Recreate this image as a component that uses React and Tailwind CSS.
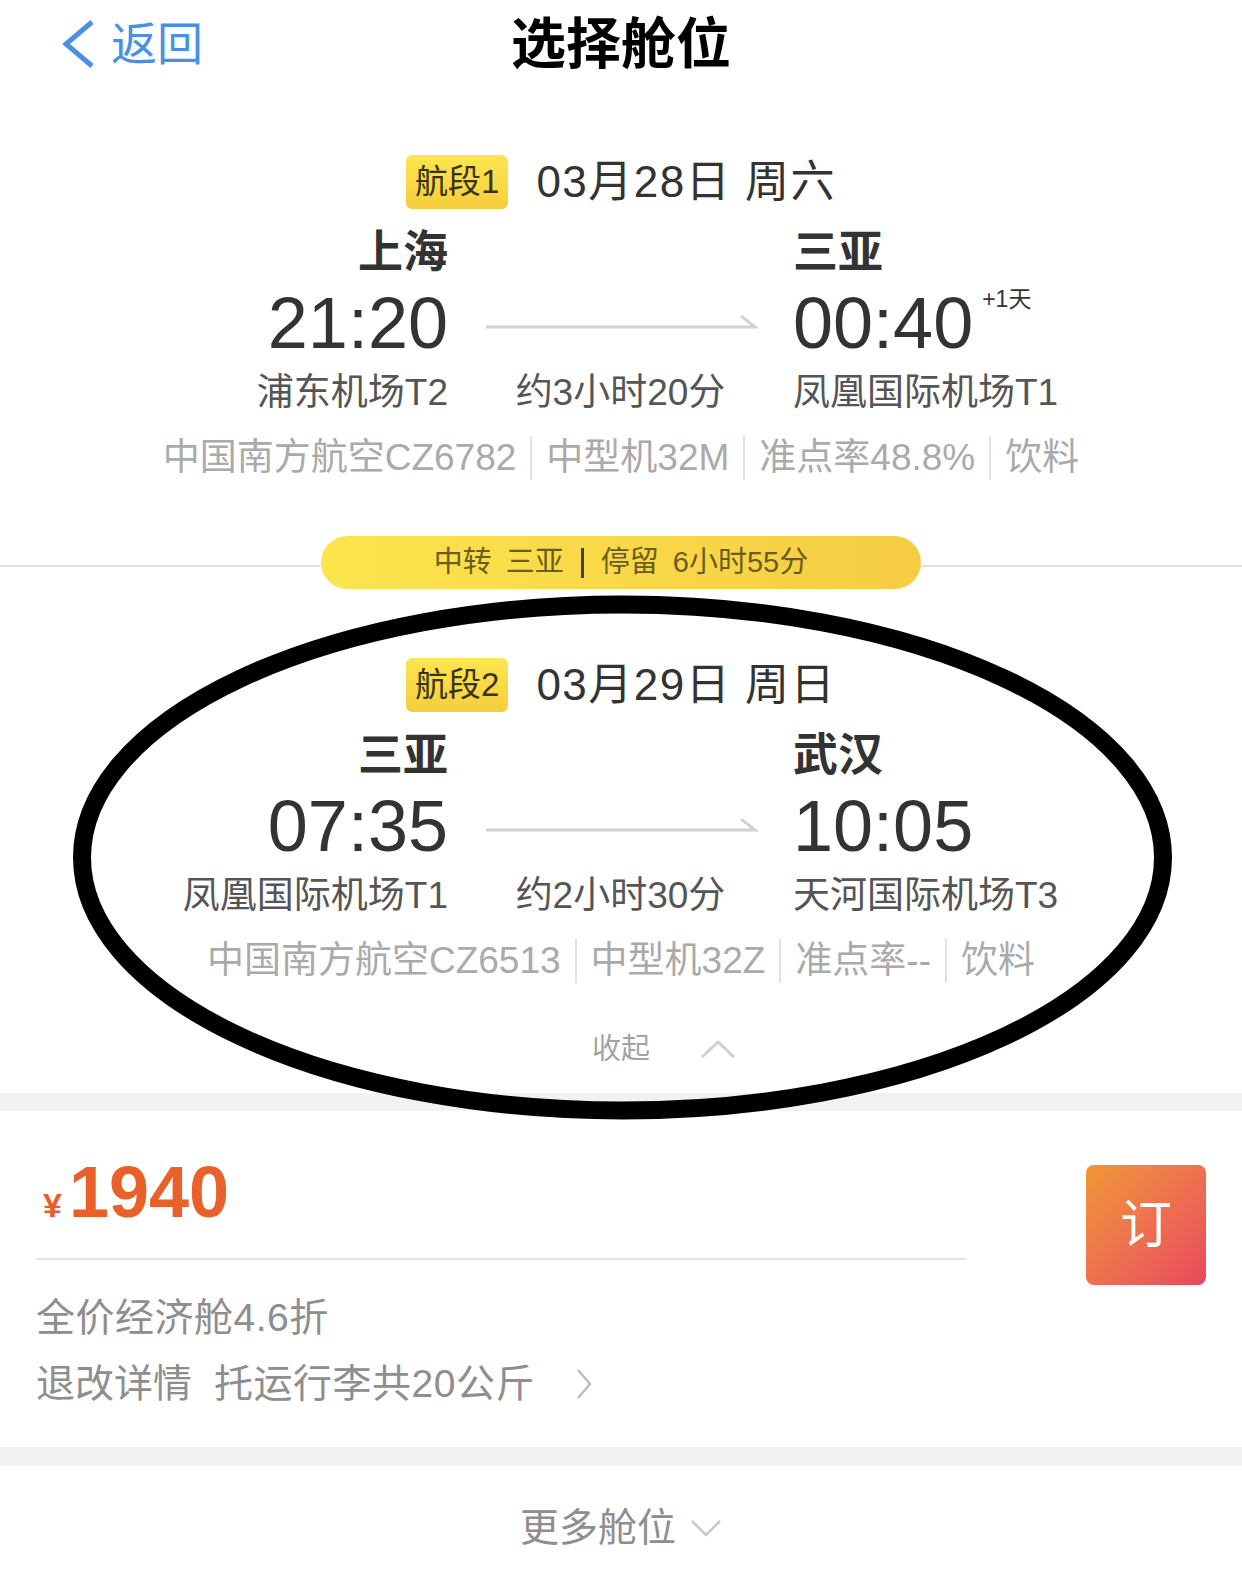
import React from "react";

const segments = [
  {
    tag: "航段1",
    date: "03月28日 周六",
    from: "上海",
    to: "三亚",
    dep: "21:20",
    arr: "00:40",
    nextDay: true,
    depPort: "浦东机场T2",
    arrPort: "凤凰国际机场T1",
    duration: "约3小时20分",
    info: ["中国南方航空CZ6782", "中型机32M", "准点率48.8%", "饮料"],
  },
  {
    tag: "航段2",
    date: "03月29日 周日",
    from: "三亚",
    to: "武汉",
    dep: "07:35",
    arr: "10:05",
    nextDay: false,
    depPort: "凤凰国际机场T1",
    arrPort: "天河国际机场T3",
    duration: "约2小时30分",
    info: ["中国南方航空CZ6513", "中型机32Z", "准点率--", "饮料"],
  },
];

const Segment = ({ seg }) => (
  <div className="flex flex-col">
    {/* tag + date */}
    <div className="h-[54px] flex items-center justify-center gap-[28px]">
      <span className="h-[54px] px-[9px] rounded-[6px] bg-linear-to-b from-[#fce64f] to-[#f6cd3d] flex items-center text-[33px] text-[#3a3216]">
        {seg.tag}
      </span>
      <span className="text-[44px] leading-none tracking-[1.5px] text-[#333]">{seg.date}</span>
    </div>

    {/* cities */}
    <div className="grid grid-cols-[448px_345px_1fr] h-[87px] items-center">
      <div className="text-right text-[45px] font-bold text-[#333]">{seg.from}</div>
      <div />
      <div className="text-[45px] font-bold text-[#333]">{seg.to}</div>
    </div>

    {/* times */}
    <div className="grid grid-cols-[448px_345px_1fr] h-[54px] items-center">
      <div className="text-right text-[72px] leading-[54px] text-[#333]">{seg.dep}</div>
      <svg width="345" height="54" viewBox="0 0 345 54" fill="none">
        <path d="M38 31 H307 L293 20" stroke="#d2d2d2" strokeWidth="3" />
      </svg>
      <div className="flex items-center h-[54px]">
        <span className="text-[72px] leading-[54px] text-[#333]">{seg.arr}</span>
        {seg.nextDay && (
          <span className="relative -top-[24px] ml-[9px] text-[23px] leading-none text-[#333]">
            +1天
          </span>
        )}
      </div>
    </div>

    {/* airports */}
    <div className="grid grid-cols-[448px_345px_1fr] h-[86px] items-center text-[37px] text-[#555]">
      <div className="text-right">{seg.depPort}</div>
      <div className="text-center">{seg.duration}</div>
      <div>{seg.arrPort}</div>
    </div>

    {/* flight info */}
    <div className="h-[44px] flex items-center justify-center text-[37px] text-[#aaa]">
      {seg.info.map((item, i) => (
        <React.Fragment key={item}>
          {i > 0 && <span className="w-[2px] h-[44px] bg-[#e2e2e2] mx-[14px]" />}
          <span>{item}</span>
        </React.Fragment>
      ))}
    </div>
  </div>
);

export default function App() {
  return (
    <div className="relative w-[1242px] h-[1584px] overflow-hidden bg-white font-['Liberation_Sans','Noto_Sans_CJK_SC',sans-serif]">
      {/* header */}
      <div className="h-[88px] grid grid-cols-[1fr_auto_1fr] items-center">
        <div className="flex items-center pl-[60px] text-[#4a90e2]">
          <svg width="38" height="50" viewBox="0 0 38 50" fill="none">
            <path d="M32 3 L6 25 L32 47" stroke="#4a90e2" strokeWidth="5" />
          </svg>
          <span className="ml-[13px] text-[46px] leading-none">返回</span>
        </div>
        <div className="text-[55px] font-bold text-black leading-none">选择舱位</div>
        <div />
      </div>

      <div className="mt-[67px]">
        <Segment seg={segments[0]} />
      </div>

      {/* transfer */}
      <div className="mt-[56px] h-[53px] flex items-start">
        <div className="flex-1 h-[2px] mt-[29px] bg-[#e0e0e0]" />
        <div className="w-[600px] h-[53px] rounded-full bg-linear-to-r from-[#fbe54d] to-[#f6cc43] flex items-center justify-center text-[29px] text-[#6b5c1f]">
          <span>中转</span>
          <span className="ml-[14px]">三亚</span>
          <span className="w-[3px] h-[30px] bg-[#4a3f12] mx-[17px]" />
          <span>停留</span>
          <span className="ml-[14px]">6小时55分</span>
        </div>
        <div className="flex-1 h-[2px] mt-[29px] bg-[#e0e0e0]" />
      </div>

      <div className="mt-[69px]">
        <Segment seg={segments[1]} />
      </div>

      {/* collapse */}
      <div className="mt-[46px] h-[40px] grid grid-cols-[1fr_auto_1fr] items-center">
        <div />
        <span className="text-[29px] text-[#a3a3a3] leading-none">收起</span>
        <div className="pl-[50px] flex items-center">
          <svg width="36" height="20" viewBox="0 0 36 20" fill="none">
            <path d="M2 18 L18 3 L34 18" stroke="#cfcfcf" strokeWidth="3" />
          </svg>
        </div>
      </div>

      <div className="mt-[24px] h-[18px] bg-[#f2f2f2]" />

      {/* price */}
      <div className="flex justify-between px-[36px]">
        <div className="w-[930px] pt-[48px] pb-[38px] flex flex-col">
          <div className="h-[66px] flex items-baseline text-[#e9602b] font-bold">
            <span className="ml-[7px] text-[34px]">¥</span>
            <span className="ml-[7px] text-[72px] leading-[66px]">1940</span>
          </div>
          <div className="mt-[33px] h-[2px] bg-[#e3e3e3]" />
          <div className="mt-[33px] h-[50px] flex items-center text-[39px] tracking-[0.5px] text-[#8e8e8e]">
            全价经济舱4.6折
          </div>
          <div className="mt-[16px] h-[50px] flex items-center text-[39px] text-[#8e8e8e]">
            <span>退改详情</span>
            <span className="ml-[22px] tracking-[0.5px]">托运行李共20公斤</span>
            <svg className="ml-[40px]" width="18" height="32" viewBox="0 0 18 32" fill="none">
              <path d="M3 2 L15 16 L3 30" stroke="#bdbdbd" strokeWidth="2.5" />
            </svg>
          </div>
        </div>
        <button className="mt-[54px] w-[120px] h-[120px] rounded-[8px] bg-linear-to-br from-[#f19633] to-[#e8465d] flex items-center justify-center text-white text-[52px]">
          订
        </button>
      </div>

      <div className="h-[19px] bg-[#f2f2f2]" />

      {/* more classes */}
      <div className="h-[118px] pt-[6px] flex items-center justify-center">
        <span className="text-[39px] text-[#8e8e8e]">更多舱位</span>
        <svg className="ml-[14px]" width="32" height="20" viewBox="0 0 32 20" fill="none">
          <path d="M2 3 L16 17 L30 3" stroke="#c8c8c8" strokeWidth="2.5" />
        </svg>
      </div>

      {/* hand-drawn annotation */}
      <svg
        className="absolute inset-0 pointer-events-none"
        width="1242"
        height="1584"
        viewBox="0 0 1242 1584"
        fill="none"
      >
        <ellipse cx="622.5" cy="857.5" rx="540.5" ry="253" stroke="#000" strokeWidth="18" />
      </svg>
    </div>
  );
}
